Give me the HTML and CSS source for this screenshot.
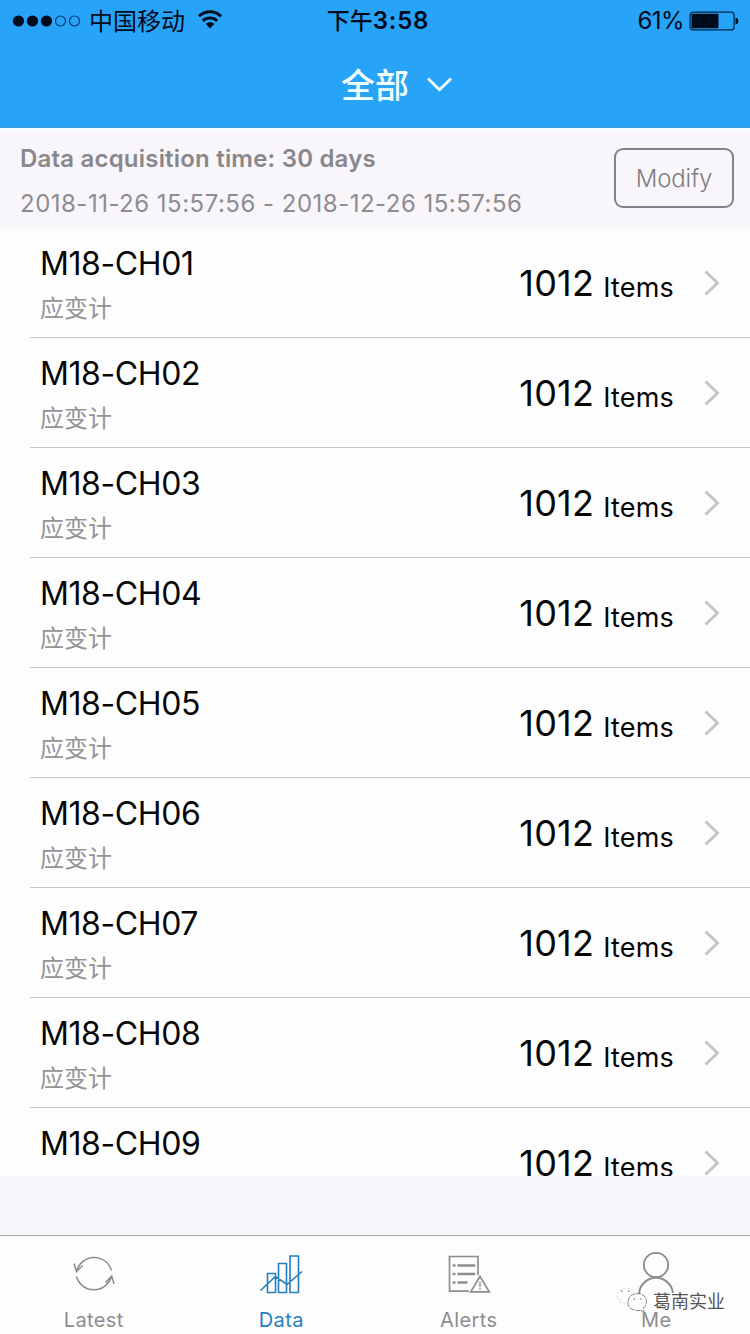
FILE: index.html
```html
<!DOCTYPE html>
<html lang="zh-CN">
<head>
<meta charset="utf-8">
<title>Data</title>
<link rel="stylesheet" href="styles.css">
</head>
<body>
<div class="app">
  <header class="top">
    <div class="status">
      <div class="status-left">
        <svg class="signal" width="70" height="14" viewBox="0 0 70 14"><g fill="#020b1c"><circle cx="6.5" cy="7" r="5.6"/><circle cx="20.5" cy="7" r="5.6"/><circle cx="34.5" cy="7" r="5.6"/></g><g fill="none" stroke="#06407c" stroke-width="1.2"><circle cx="48.5" cy="7" r="5"/><circle cx="62.5" cy="7" r="5"/></g></svg>
        <span class="carrier">中国移动</span>
        <svg class="wifi" width="26" height="20" viewBox="0 0 26 20"><g fill="none" stroke="#020b1c" stroke-width="2.9"><path d="M2 6.3C8.5.3 17.5.3 24 6.3"/><path d="M5.8 10.8C10 7 16 7 20.2 10.8"/></g><path d="M8.6 13.8C11.2 11.6 14.8 11.6 17.4 13.8L13 18.4Z" fill="#020b1c"/></svg>
      </div>
      <div class="clock">下午<span class="digits">3:58</span></div>
      <div class="status-right"><span class="percent">61%</span>
        <svg class="battery" width="50" height="20" viewBox="0 0 50 20"><rect x="1.1" y="1.1" width="44" height="17.8" rx="3" fill="none" stroke="#03234a" stroke-width="1.2"/><rect x="2.5" y="2.7" width="27" height="14.6" rx="1" fill="#020b1c"/><path d="M46.5 6.5Q49.3 7 49.3 10T46.5 13.5Z" fill="#020b1c"/></svg>
      </div>
    </div>
    <div class="title"><h1 class="title-text">全部</h1><svg width="26" height="16" viewBox="0 0 26 16"><path d="M1 2.5L12.5 13.8L24 2.5" fill="none" stroke="#f2ffff" stroke-width="2.8"/></svg></div>
  </header>
  <section class="period">
    <div><div class="period-title">Data acquisition time: 30 days</div><div class="period-range">2018-11-26 15:57:56 - 2018-12-26 15:57:56</div></div>
    <button class="modify">Modify</button>
  </section>
  <main class="list" id="list"></main>
  <nav class="tabs">
    <div class="tab">
      <svg class="tab-icon" width="48" height="44" viewBox="0 0 48 44" fill="none" stroke="#8d8d90" stroke-width="1.5"><path d="M41.5 18.5A18 17.8 0 0 0 6.6 19.5M4 11.5L6.5 19.5L12.5 13.5M6.5 24.5A18 17.8 0 0 0 41.3 24.5M35.5 30.5L41.7 24L44 32"/></svg>
      <span class="tab-label">Latest</span>
    </div>
    <div class="tab tab-active">
      <svg class="tab-icon" width="48" height="44" viewBox="0 0 48 44" fill="none" stroke="#257fbd" stroke-width="1.6"><path d="M10.5 40.5V21.5H18.5V40.5ZM21.5 40.5V11.5H29.5V40.5ZM33 40.5V4H41.5V40.5ZM3.5 38.5L18.5 24.5L30 32.5L45 19.5"/></svg>
      <span class="tab-label">Data</span>
    </div>
    <div class="tab">
      <svg class="tab-icon" width="48" height="44" viewBox="0 0 48 44" fill="none" stroke="#8d8d90" stroke-width="1.7"><path d="M24 39.2H4.5V4.5H33V23"/><path stroke-width="2.6" d="M7.7 13.5H10.5M12.5 13.5H30.3M7.7 22H10.5M12.5 22H30.3M7.7 30.5H10.5M12.5 30.5H22.5"/><path d="M35 24.5L44.3 39.8H25.7Z" fill="#fdfdfe"/><path stroke-width="1.3" d="M35 29.5V35M35 36.3V37.7"/></svg>
      <span class="tab-label">Alerts</span>
    </div>
    <div class="tab">
      <svg class="tab-icon" width="48" height="44" viewBox="0 0 48 44" fill="none" stroke="#8d8d90" stroke-width="1.9"><circle cx="24" cy="13" r="12.2"/><path d="M7 43A17 17.3 0 0 1 41 43"/></svg>
      <span class="tab-label">Me</span>
    </div>
  </nav>
  <div class="watermark">
    <svg width="32" height="26" viewBox="0 0 32 26"><path d="M13 15.5Q9 17 6 15L4 16L4.5 13.5Q-1 9 2.5 4.5Q9-1.5 17 3.5L20 6Q12 9 13 15.5Z" fill="#fdfdfe" stroke="#bbb" stroke-width=".7" stroke-dasharray="2 2"/><path d="M24.5 23.5Q13.5 24 12 17Q11.5 7.5 21 6.5Q30.5 7 30.5 15Q30 19 27.5 21L28 24.5Z" fill="#fdfdfe" stroke="#777" stroke-width=".9" stroke-dasharray="5 1"/><path d="M5 4H6.5M12 4H13.5M17.5 12H19M24 12H25.5" stroke="#666" stroke-width="1.2"/></svg>
    <span class="watermark-text">葛南实业</span>
  </div>
</div>
<script src="list.js"></script>
</body>
</html>
```
FILE: styles.css
```css
* { box-sizing: border-box; }
body { margin: 0; background: #f8f6fa; }
.app { position: relative; width: 750px; height: 1334px; overflow: hidden; display: flex; flex-direction: column; font-family: Inter, "Noto Sans CJK SC", sans-serif; color: #060606; }
.top { height: 128px; flex: none; background: #27a4f8; box-shadow: inset 0 -1px #3f99dc; }
.status { height: 40px; display: grid; grid-template-columns: 1fr auto 1fr; align-items: center; padding: 1px 11px 0 12px; color: #020b1c; }
.status-left { display: flex; align-items: center; }
.carrier { margin: -2px 0 0 7px; font-size: 24px; line-height: 36px; font-family: "Noto Sans CJK SC", sans-serif; }
.wifi { margin: -2px 0 0 12px; }
.clock { padding-left: 5px; font-size: 23px; line-height: 36px; font-weight: 500; }
.digits { font-size: 24px; font-weight: 600; letter-spacing: .8px; }
.status-right { display: flex; justify-content: flex-end; align-items: center; }
.percent { font-size: 24px; letter-spacing: -.6px; margin-right: 5px; }
.title { display: flex; align-items: center; gap: 18px; height: 88px; padding: 0 0 1px 341px; }
.title-text { margin: 0; font-size: 34px; line-height: 50px; font-weight: 500; color: #f2ffff; font-family: "Noto Sans CJK SC", sans-serif; }
.period { height: 100px; flex: none; background: #f8f6fa; display: flex; justify-content: space-between; align-items: flex-start; padding: 9px 16px 0 20px; color: #89878b; box-shadow: inset 0 3px #f4fcff; }
.period-title { font-size: 24px; line-height: 44px; font-weight: 600; letter-spacing: .2px; }
.period-range { font-size: 24px; line-height: 44px; letter-spacing: .49px; color: #8e8c90; padding-top: 1px; }
.modify { width: 120px; height: 60px; margin: 11px 0 0; border: 2px solid #858388; border-radius: 9px; background: transparent; font: 300 24px/56px Inter, sans-serif; letter-spacing: -.2px; color: #7e7c80; padding: 1px 0 0; }
.list { height: 948px; flex: none; overflow: hidden; background: #fdfdfe; }
.row { height: 110px; margin-left: 30px; padding: 15px 28px 0 10px; border-bottom: 1px solid #c6c5c8; display: flex; justify-content: space-between; }
.name { padding-top: 1px; font-size: 32px; line-height: 40px; letter-spacing: -.4px; }
.kind { margin-top: 5px; font-size: 24px; line-height: 36px; color: #949496; font-family: "Noto Sans CJK SC", sans-serif; }
.count { display: flex; align-items: flex-start; }
.number { font-size: 36px; line-height: 80px; letter-spacing: .2px; }
.unit { font-size: 27px; line-height: 80px; padding-top: 5px; margin-left: 9px; letter-spacing: .2px; }
.chevron { margin: 26px 0 0 28px; }
.tabs { height: 99px; margin-top: 59px; flex: none; display: grid; grid-template-columns: repeat(4, 1fr); background: #fdfdfe; border-top: 1px solid #aaa7ad; }
.tab { display: flex; flex-direction: column; align-items: center; padding-top: 16px; color: #8d8d90; }
.tab-icon { flex: none; }
.tab-label { font-size: 20px; line-height: 24px; margin-top: 12px; letter-spacing: .4px; }
.tab-active { color: #257fbd; }
.watermark { position: absolute; left: 616px; top: 1287px; display: flex; align-items: center; gap: 5px; }
.watermark-text { font: 18px/26px "Noto Sans CJK SC", sans-serif; color: #555; text-shadow: -1px -1px #fff, 1px 1px #fff; }
```
FILE: list.js
```js
const list = document.getElementById("list");
for (let i = 1; i <= 9; i++) {
  list.insertAdjacentHTML("beforeend", `<div class="row"><div><div class="name">M18-CH0${i}</div><div class="kind">应变计</div></div><div class="count"><span class="number">1012</span><span class="unit">Items</span><svg class="chevron" width="20" height="28" viewBox="0 0 20 28"><path d="M3.5 2.5L15.5 14L3.5 25.5" fill="none" stroke="#c5c5c9" stroke-width="3"/></svg></div></div>`);
}
```
